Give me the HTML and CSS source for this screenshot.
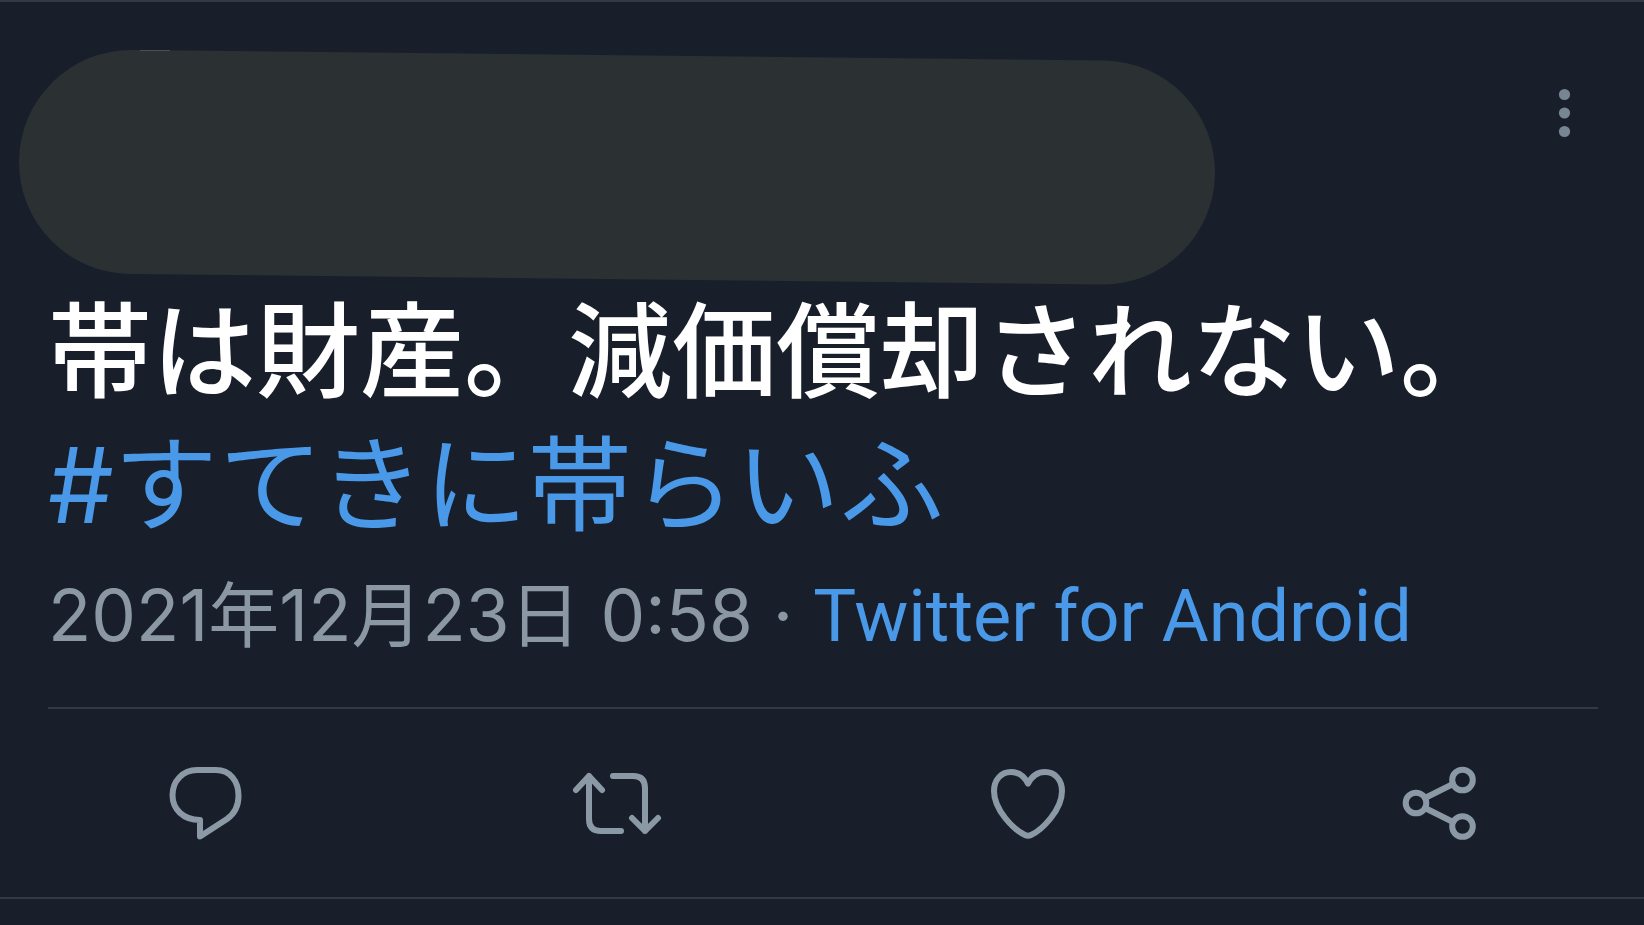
FILE: index.html
```html
<!DOCTYPE html>
<html lang="ja">
    <head>
        <meta charset="utf-8">
        <title>ツイート</title>
        <link rel="stylesheet" href="styles.css">
    </head>
    <body>

        <article class="tweet">
<!----- HEADER ----->
            <header class="tweetHeader">
                <svg class="author" viewBox="0 0 1198 238" aria-hidden="true">
                    <line class="authorMask" x1="113" y1="114" x2="1085" y2="124.500"/>
                    <path class="authorEdge" d="M122 2.500H152"/>
                </svg>
                <button class="menuButton" type="button" aria-label="メニュー">
                    <svg viewBox="0 0 64 64">
                        <circle cx="32.500" cy="13.500" r="5.600"/>
                        <circle cx="32.500" cy="32" r="5.600"/>
                        <circle cx="32.500" cy="50.500" r="5.600"/>
                    </svg>
                </button>
            </header>

<!----- TEXT ----->
            <p class="tweetText">帯は財産。減価償却されない。<br><a href="#">#すてきに帯らいふ</a></p>
            <p class="tweetInfo">2021年12月23日 0:58 · <a href="#">Twitter for Android</a></p>

<!----- ACTIONS ----->
            <div class="actions">
                <button type="button" aria-label="返信">
                    <svg viewBox="0 0 96 96">
                        <path d="M42 65V81.500L69 64C76 59 80.500 51 80.500 41C80.500 26 72 15 58 15H39C25 15 14.500 26 14.500 40S25 65 42 65Z"/>
                    </svg>
                </button>
                <button type="button" aria-label="リツイート">
                    <svg viewBox="0 0 96 96">
                        <path d="M7 35L20 21L33 35M20 21V64Q20 76 32 76H52"/>
                        <path d="M44 21H64Q76 21 76 33V76M63 63L76 76L89 63"/>
                    </svg>
                </button>
                <button type="button" aria-label="いいね">
                    <svg viewBox="0 0 96 96">
                        <path d="M48 28.500C44 21 38 17 31 17C21 17 14 25 14 36C14 55 34 75 45 80Q48 81.500 51 80C62 75 82 55 82 36C82 25 75 17 65 17C58 17 52 21 48 28.500Z"/>
                    </svg>
                </button>
                <button type="button" aria-label="共有">
                    <svg viewBox="0 0 96 96">
                        <circle cx="25" cy="48" r="10.300"/>
                        <circle cx="71.500" cy="25" r="10.300"/>
                        <circle cx="71.500" cy="71.500" r="10.300"/>
                        <path d="M34 43L62 29M34 53L62 67"/>
                    </svg>
                </button>
            </div>
        </article>

    </body>
</html>
```

FILE: styles.css
```css
body{
    margin: 0;
    background-color: #191f2a;
    font-family: Inter, "Noto Sans CJK JP", sans-serif;
}
a{
    color: #4a99e9;
    text-decoration: none;
}
button{
    padding: 0;
    border: none;
    background: none;
    cursor: pointer;
}
svg{
    display: block;
}
.tweet{
    border-top: 2px solid #333945;
    border-bottom: 2px solid #333945;
}

/*----- HEADER -----*/
.tweetHeader{
    display: flex;
    justify-content: space-between;
    align-items: flex-start;
    padding: 46px 48px 0 18px;
}
.author{
    width: 1198px;
    height: 238px;
}
.authorMask{
    stroke: #2b3033;
    stroke-width: 224;
    stroke-linecap: round;
}
.authorEdge{
    stroke: #4a4f55;
    stroke-width: 1;
}
.menuButton{
    margin-top: 33px;
}
.menuButton svg{
    width: 64px;
    height: 64px;
    fill: #788593;
}

/*----- TEXT -----*/
.tweetText{
    margin: 0;
    padding: 0 48px;
    color: #fff;
    font-size: 104px;
    font-weight: 500;
    line-height: 133px;
}
.tweetText a{
    font-weight: 400;
}
.tweetInfo{
    margin: 0 46px 0 48px;
    padding: 19px 0 46px;
    border-bottom: 2px solid #333945;
    color: #8b98a3;
    font-size: 71px;
    line-height: 88px;
}
.tweetInfo a{
    font-family: Roboto, sans-serif;
    font-size: 72px;
}

/*----- ACTIONS -----*/
.actions{
    display: grid;
    grid-template-columns: repeat(4, 1fr);
    justify-items: center;
    padding: 46px 0;
}
.actions svg{
    width: 96px;
    height: 96px;
    fill: none;
    stroke: #8b99a6;
    stroke-width: 6;
    stroke-linecap: round;
    stroke-linejoin: round;
}
```
